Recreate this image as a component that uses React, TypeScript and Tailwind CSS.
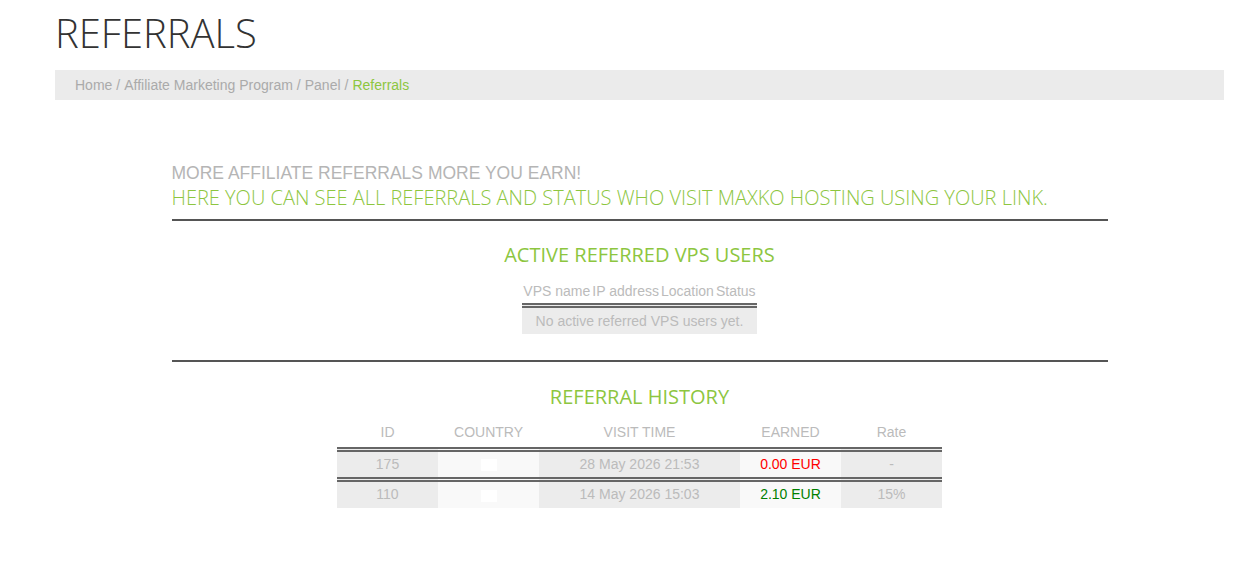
import React from "react";

const OS = { fontFamily: '"Open Sans", "Liberation Sans", sans-serif' };
const AR = { fontFamily: '"Liberation Sans", Arial, sans-serif' };

export default function App() {
  return (
    <div className="bg-white min-h-[564px] w-[1251px] pl-[55px] pr-[27px]" style={AR}>
      <h1 className="mt-[8px] text-[40px] leading-[50px] font-light text-[#333]" style={OS}>
        REFERRALS
      </h1>
      <div className="mt-[12px] h-[30px] bg-[#ebebeb] pl-[20px] flex items-center text-[14px] text-[#aaa]">
        <span>Home</span>
        <span className="mx-[4px]">/</span>
        <span>Affiliate Marketing Program</span>
        <span className="mx-[4px]">/</span>
        <span>Panel</span>
        <span className="mx-[4px]">/</span>
        <span className="text-[#8dc63f]">Referrals</span>
      </div>

      <div className="w-[936px] mx-auto">
        <div className="mt-[62px] text-[17.5px] leading-[22px] text-[#b5b5b5]">
          MORE AFFILIATE REFERRALS MORE YOU EARN!
        </div>
        <div className="mt-[2px] text-[20px] leading-[24px] font-light text-[#8dc63f]" style={OS}>
          HERE YOU CAN SEE ALL REFERRALS AND STATUS WHO VISIT MAXKO HOSTING USING YOUR LINK.
        </div>
        <div className="mt-[9px] border-t-2 border-[#555]" />

        <div className="mt-[21px] text-center text-[20px] leading-[26px] text-[#8dc63f]" style={OS}>
          ACTIVE REFERRED VPS USERS
        </div>
        <div className="mt-[13px] flex justify-center">
          <table className="text-[14px] text-[#bbb] border-collapse">
            <thead>
              <tr className="border-b-[5px] border-double border-[#666]">
                <th className="font-normal px-[1px] h-[24px]">VPS name</th>
                <th className="font-normal px-[1px]">IP address</th>
                <th className="font-normal px-[1px]">Location</th>
                <th className="font-normal px-[1px]">Status</th>
              </tr>
            </thead>
            <tbody>
              <tr>
                <td colSpan={4} className="bg-[#ececec] text-center h-[29px] pt-[1px]">
                  No active referred VPS users yet.
                </td>
              </tr>
            </tbody>
          </table>
        </div>
        <div className="mt-[26px] border-t-2 border-[#555]" />

        <div className="mt-[22px] text-center text-[20px] leading-[26px] text-[#8dc63f]" style={OS}>
          REFERRAL HISTORY
        </div>
        <div className="mt-[9px] flex justify-center">
          <table className="text-[14px] text-[#bbb] border-collapse w-[605px] text-center">
            <thead>
              <tr className="border-b-[5px] border-double border-[#666]">
                <th className="font-normal w-[101px] h-[30px]">ID</th>
                <th className="font-normal w-[101px]">COUNTRY</th>
                <th className="font-normal w-[201px]">VISIT TIME</th>
                <th className="font-normal w-[101px]">EARNED</th>
                <th className="font-normal w-[101px]">Rate</th>
              </tr>
            </thead>
            <tbody>
              <tr className="border-b-[5px] border-double border-[#666]">
                <td className="bg-[#ececec] h-[30px]">175</td>
                <td className="bg-[#f9f9f9]">
                  <span className="inline-block w-[16px] h-[12px] bg-white align-middle" />
                </td>
                <td className="bg-[#ececec]">28 May 2026 21:53</td>
                <td className="bg-[#f9f9f9] text-[#ff0000]">0.00 EUR</td>
                <td className="bg-[#ececec]">-</td>
              </tr>
              <tr>
                <td className="bg-[#ececec] h-[29px]">110</td>
                <td className="bg-[#f9f9f9]">
                  <span className="inline-block w-[16px] h-[12px] bg-white align-middle" />
                </td>
                <td className="bg-[#ececec]">14 May 2026 15:03</td>
                <td className="bg-[#f9f9f9] text-[#008000]">2.10 EUR</td>
                <td className="bg-[#ececec]">15%</td>
              </tr>
            </tbody>
          </table>
        </div>
      </div>
    </div>
  );
}
